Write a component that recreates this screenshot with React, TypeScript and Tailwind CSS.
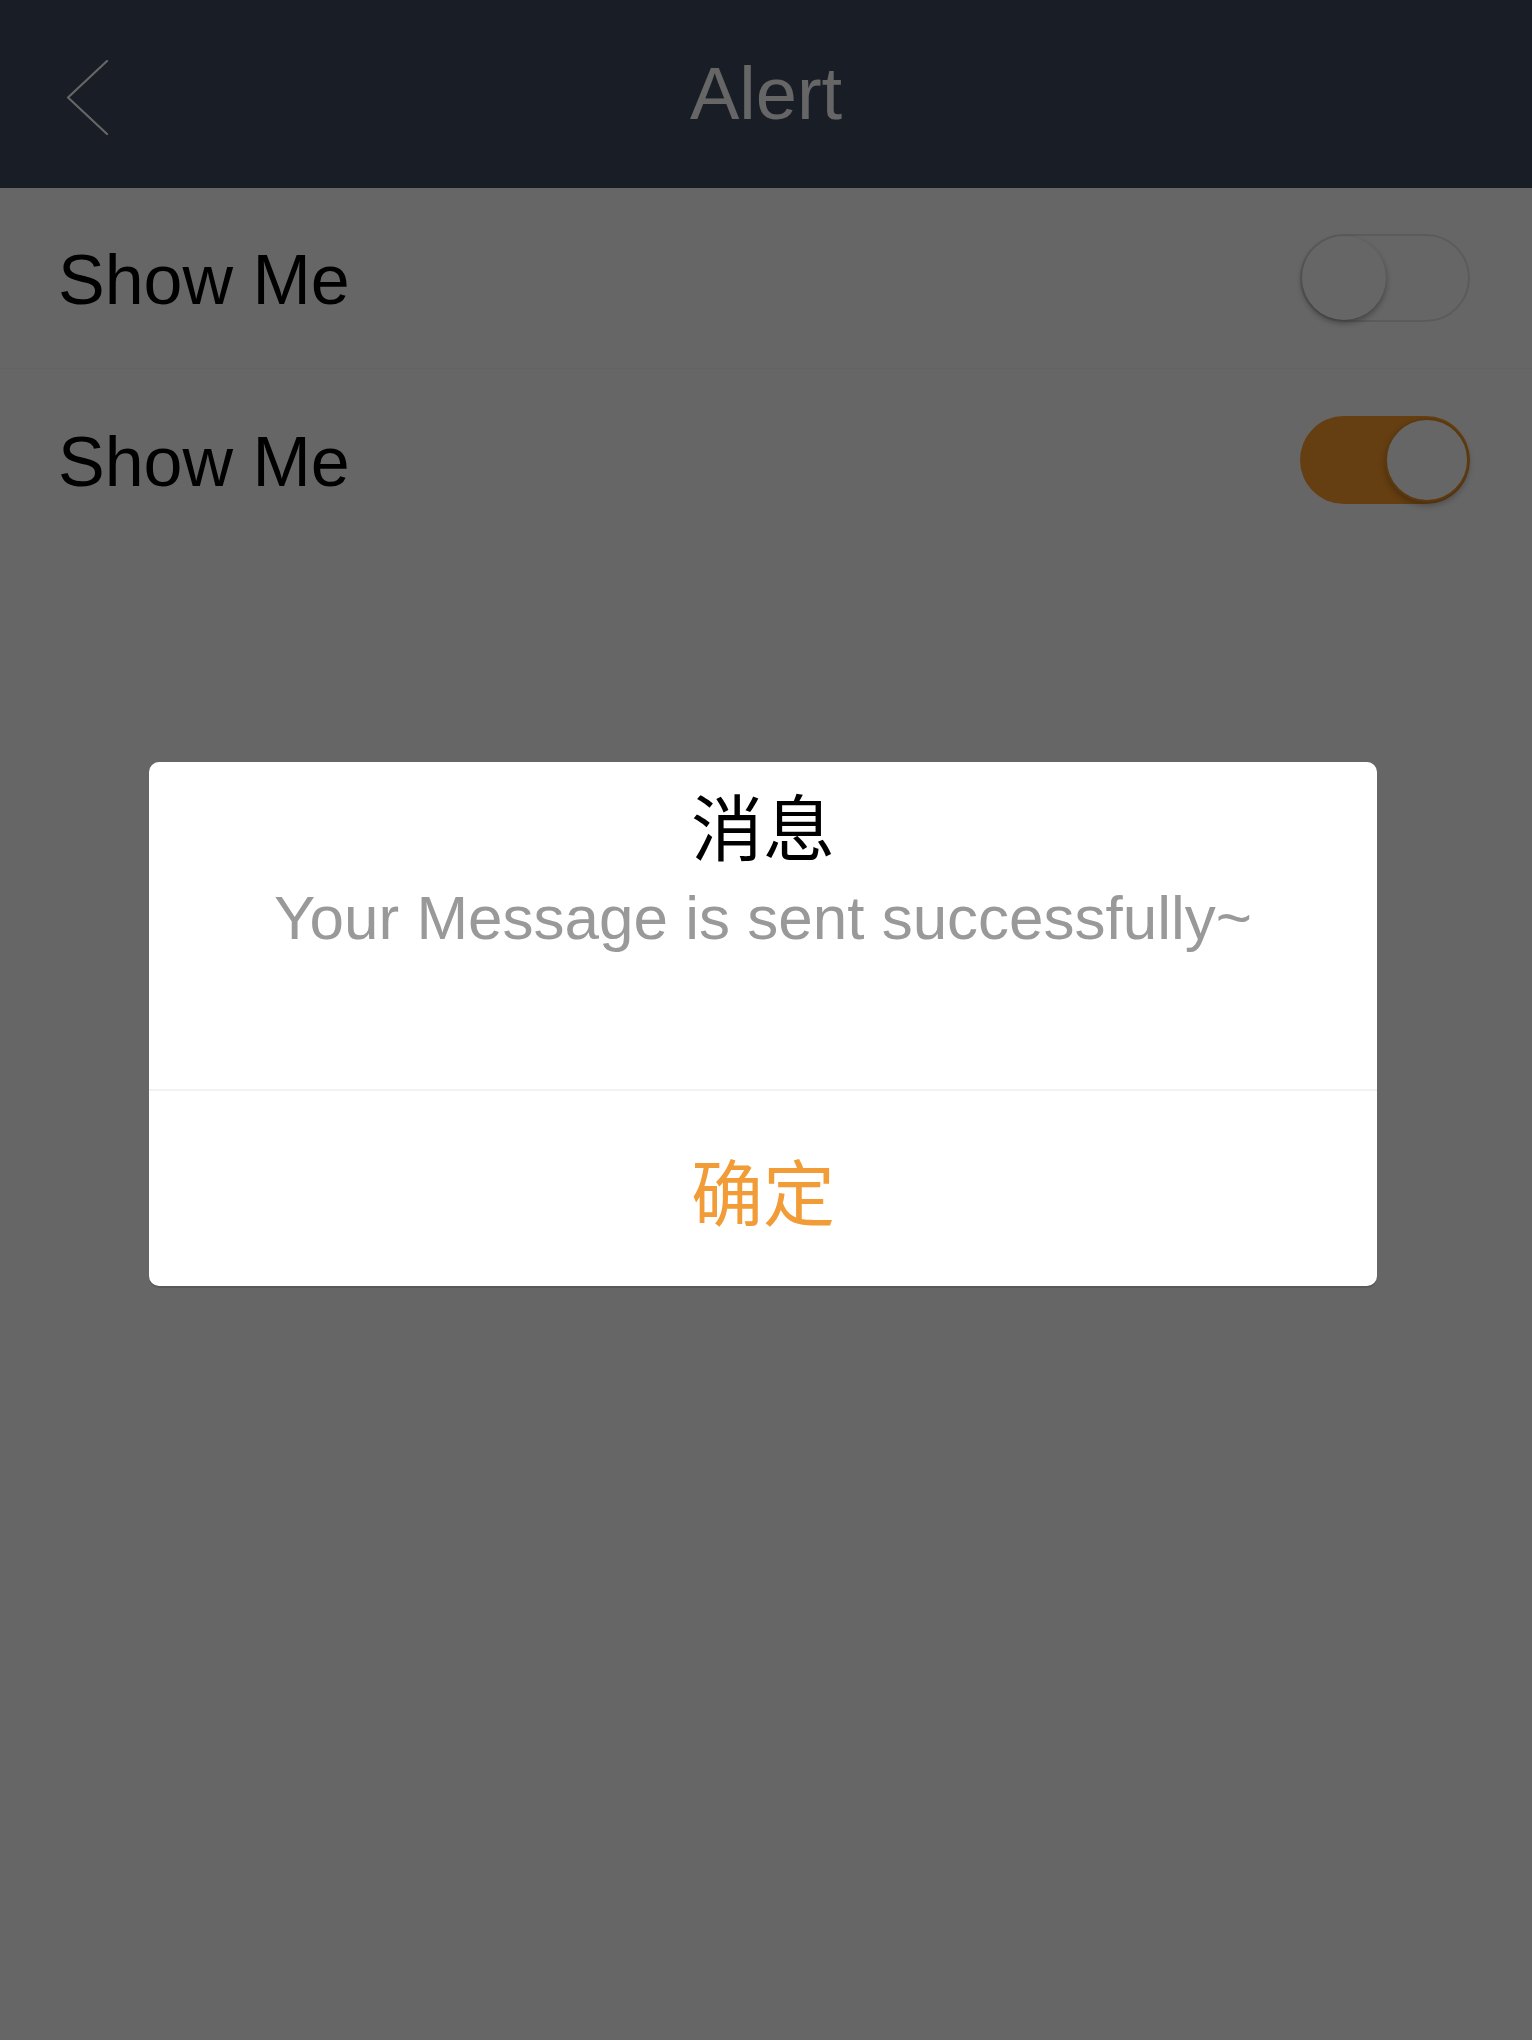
import { useState } from "react";

const LATIN = "font-['Liberation_Sans','Noto_Sans_CJK_SC',sans-serif]";
const CJK = "font-['Noto_Sans_CJK_SC','Liberation_Sans',sans-serif]";

function Toggle({ on }: { on: boolean }) {
  return (
    <div
      className={
        on
          ? "relative w-[170px] h-[88px] rounded-full bg-[#fc9d2d]"
          : "relative w-[170px] h-[88px] rounded-full bg-white border-2 border-[#e3e3e3]"
      }
    >
      <div
        className={
          on
            ? "absolute top-[2px] right-[1px] w-[84px] h-[84px] rounded-full bg-white border-2 border-[#e8902a] shadow-[0_4px_6px_rgba(0,0,0,0.25)]"
            : "absolute top-[0px] left-[0px] w-[84px] h-[84px] rounded-full bg-white shadow-[0_3px_6px_rgba(0,0,0,0.35)]"
        }
      />
    </div>
  );
}

export default function App() {
  const [rows] = useState([false, true]);

  return (
    <div className={`relative min-h-[2040px] bg-white ${LATIN}`}>
      {/* Header */}
      <header className="h-[188px] bg-[#3c4960] grid grid-cols-[1fr_auto_1fr] items-center">
        <div className="pl-[66px] pt-[8px] flex items-center">
          <svg width="44" height="76" viewBox="0 0 44 76" fill="none">
            <path d="M41 1 L2 37.5 L41 74" stroke="#ffffff" strokeWidth="2.2" strokeLinecap="round" strokeLinejoin="round" />
          </svg>
        </div>
        <h1 className="text-white text-[74px] leading-none">Alert</h1>
        <div />
      </header>

      {/* Settings rows */}
      {rows.map((on, i) => (
        <div
          key={i}
          className={
            i < rows.length - 1
              ? "h-[181px] flex items-center justify-between pl-[58px] pr-[62px] border-b border-[#f6f6f6]"
              : "h-[181px] flex items-center justify-between pl-[58px] pr-[62px]"
          }
        >
          <span className="pt-[4px] text-black text-[70px] leading-none">Show Me</span>
          <Toggle on={on} />
        </div>
      ))}

      {/* Modal */}
      <div className="absolute inset-0 bg-black/60 flex items-center justify-center pt-[8px] pr-[6px]">
        <div className="w-[1228px] bg-white rounded-[10px] shadow-[0_2px_0_rgba(0,0,0,0.12)]">
          <div className="h-[329px] pt-[26px] flex flex-col items-center border-b-2 border-[#f2f2f2]">
            <h2 className={`${CJK} text-black text-[72px] leading-[72px]`}>消息</h2>
            <p className="mt-[22px] text-[#999999] text-[62px] leading-[72px]">Your Message is sent successfully~</p>
          </div>
          <button className={`${CJK} w-full h-[195px] flex items-center justify-center text-[#f29c38] text-[72px] leading-[72px]`}>
            确定
          </button>
        </div>
      </div>
    </div>
  );
}
